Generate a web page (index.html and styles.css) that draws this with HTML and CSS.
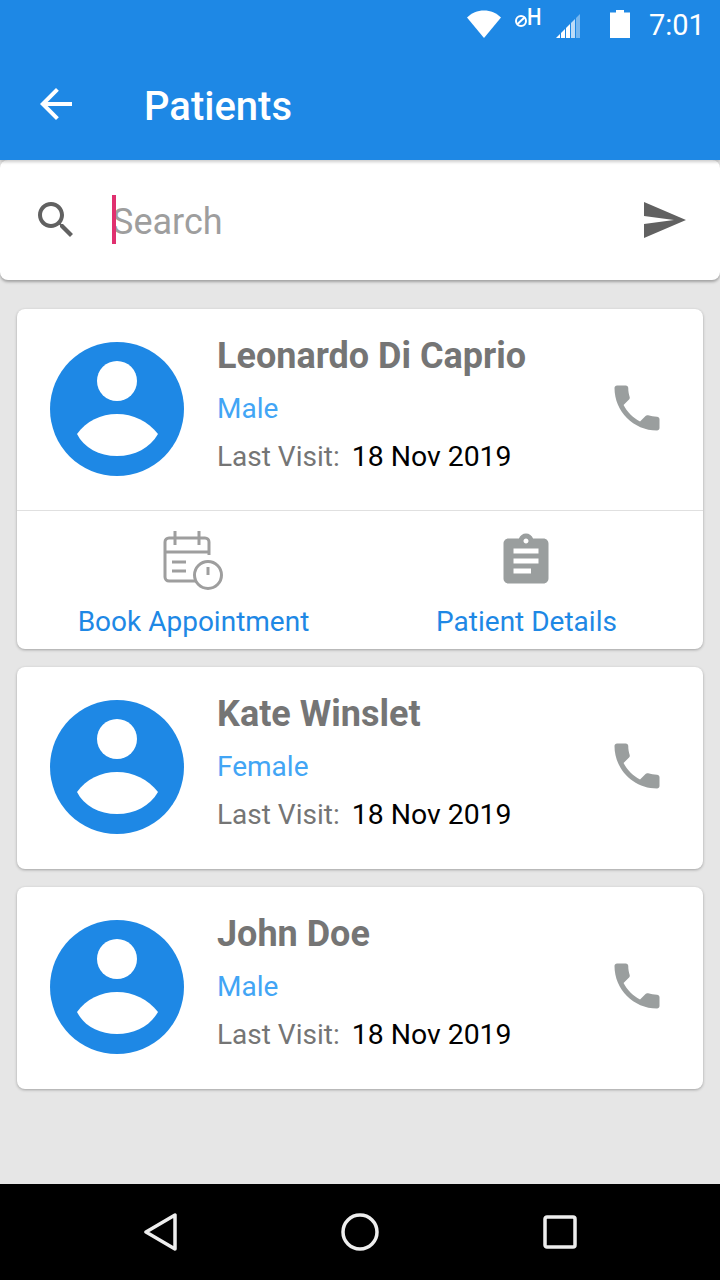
FILE: index.html
```html
<!DOCTYPE html>
<html lang="en">
<head>
  <meta charset="UTF-8" />
  <meta name="viewport" content="width=device-width, initial-scale=1" />
  <title>Patients</title>
  <link rel="stylesheet" href="styles.css">
</head>
<body>
  <div class="app">
    <header class="app-header">
      <div class="status-bar">
        <svg class="icon-wifi" width="34" height="28" viewBox="0 0 36 28" preserveAspectRatio="none"><path d="M0 7.500C5 3 11 .5 18 .5S31 3 36 7.500L18 28z" fill="#fff"/></svg>
        <div class="net-type">
          <svg width="14" height="14" viewBox="0 0 14 14"><circle cx="7" cy="7" r="5" fill="none" stroke="#fff" stroke-width="2"/><path d="M3 10.500L11 3" stroke="#fff" stroke-width="2"/></svg>
          <span>H</span>
        </div>
        <svg class="icon-signal" width="24" height="24" viewBox="0 0 24 24">
          <path d="M0 24l4-4v4z" fill="#fff"/>
          <path d="M5 24v-5l4-4v9z" fill="#fff"/>
          <path d="M10 24V14l4-4v14z" fill="#fff"/>
          <path d="M15 24V9l4-4v19z" fill="#fff" opacity=".7"/>
          <path d="M20 24V4l4-4v24z" fill="#fff" opacity=".4"/>
        </svg>
        <svg class="icon-battery" width="20" height="28" viewBox="0 0 20 28"><path d="M6 0h8v2.500h6V28H0V2.500h6z" fill="#fff"/></svg>
        <span class="clock">7:01</span>
      </div>
      <div class="toolbar">
        <svg class="back" width="48" height="48" viewBox="0 0 24 24"><path d="M20 11H7.830l5.590-5.590L12 4l-8 8 8 8 1.410-1.410L7.830 13H20v-2z" fill="#fff"/></svg>
        <h1>Patients</h1>
      </div>
    </header>

    <div class="search-box">
      <svg width="48" height="48" viewBox="0 0 24 24"><path d="M15.500 14h-.79l-.28-.27C15.410 12.590 16 11.110 16 9.500 16 5.910 13.090 3 9.500 3S3 5.910 3 9.500 5.910 16 9.500 16c1.610 0 3.090-.59 4.230-1.570l.27.28v.79l5 4.990L20.490 19l-4.990-5zm-6 0C7.010 14 5 11.990 5 9.500S7.010 5 9.500 5 14 7.010 14 9.500 11.990 14 9.500 14z" fill="#616161"/></svg>
      <div class="search-field">
        <i class="caret"></i>
        <span>Search</span>
      </div>
      <svg width="48" height="48" viewBox="0 0 24 24"><path d="M2.010 21L23 12 2.010 3 2 10l15 2-15 2z" fill="#616161"/></svg>
    </div>

    <main class="patient-list">
      <section class="card">
        <div class="card-main">
          <svg class="avatar" width="134" height="134" viewBox="0 0 134 134"><circle cx="67" cy="67" r="67" fill="#1e88e5"/><circle cx="67" cy="39" r="20" fill="#fff"/><path d="M27 92C36 79 51 72 67 72S98 79 108 92C100 106 85 114 67 114S34 106 27 92z" fill="#fff"/></svg>
          <div class="info">
            <div class="name">Leonardo Di Caprio</div>
            <div class="gender">Male</div>
            <div class="visit">Last Visit:<span>18 Nov 2019</span></div>
          </div>
          <svg class="phone" width="60" height="60" viewBox="0 0 24 24"><path d="M6.620 10.790c1.440 2.830 3.760 5.140 6.590 6.590l2.200-2.200c.27-.27.67-.36 1.020-.24 1.120.37 2.330.57 3.570.57.55 0 1 .45 1 1V20c0 .55-.45 1-1 1-9.390 0-17-7.610-17-17 0-.55.45-1 1-1h3.500c.55 0 1 .45 1 1 0 1.250.2 2.450.57 3.570.11.35.03.74-.25 1.020l-2.200 2.200z" fill="#9a9e9e"/></svg>
        </div>
        <div class="card-actions">
          <div class="action">
            <svg width="60" height="60" viewBox="0 0 60 60" fill="none" stroke="#9e9e9e" stroke-width="3">
              <path d="M33 50H6a4 4 0 0 1-4-4V11a4 4 0 0 1 4-4h36a4 4 0 0 1 4 4v13"/>
              <path d="M2 21h44M12 0v14M36 0v14M9 31h14M9 40h14"/>
              <circle cx="45" cy="44" r="13.500"/>
              <path d="M45 36v8"/>
            </svg>
            <span>Book Appointment</span>
          </div>
          <div class="action">
            <svg width="60" height="60" viewBox="0 0 24 24"><path d="M19 3h-4.180C14.400 1.840 13.300 1 12 1c-1.300 0-2.400.84-2.820 2H5c-1.100 0-2 .9-2 2v14c0 1.100.9 2 2 2h14c1.100 0 2-.9 2-2V5c0-1.100-.9-2-2-2zm-7 0c.55 0 1 .45 1 1s-.45 1-1 1-1-.45-1-1 .45-1 1-1zm2 14H7v-2h7v2zm3-4H7v-2h10v2zm0-4H7V7h10v2z" fill="#9a9e9e"/></svg>
            <span>Patient Details</span>
          </div>
        </div>
      </section>

      <section class="card">
        <div class="card-main">
          <svg class="avatar" width="134" height="134" viewBox="0 0 134 134"><circle cx="67" cy="67" r="67" fill="#1e88e5"/><circle cx="67" cy="39" r="20" fill="#fff"/><path d="M27 92C36 79 51 72 67 72S98 79 108 92C100 106 85 114 67 114S34 106 27 92z" fill="#fff"/></svg>
          <div class="info">
            <div class="name">Kate Winslet</div>
            <div class="gender">Female</div>
            <div class="visit">Last Visit:<span>18 Nov 2019</span></div>
          </div>
          <svg class="phone" width="60" height="60" viewBox="0 0 24 24"><path d="M6.620 10.790c1.440 2.830 3.760 5.140 6.590 6.590l2.200-2.200c.27-.27.67-.36 1.020-.24 1.120.37 2.330.57 3.570.57.55 0 1 .45 1 1V20c0 .55-.45 1-1 1-9.390 0-17-7.610-17-17 0-.55.45-1 1-1h3.500c.55 0 1 .45 1 1 0 1.250.2 2.450.57 3.570.11.35.03.74-.25 1.020l-2.200 2.200z" fill="#9a9e9e"/></svg>
        </div>
      </section>

      <section class="card">
        <div class="card-main">
          <svg class="avatar" width="134" height="134" viewBox="0 0 134 134"><circle cx="67" cy="67" r="67" fill="#1e88e5"/><circle cx="67" cy="39" r="20" fill="#fff"/><path d="M27 92C36 79 51 72 67 72S98 79 108 92C100 106 85 114 67 114S34 106 27 92z" fill="#fff"/></svg>
          <div class="info">
            <div class="name">John Doe</div>
            <div class="gender">Male</div>
            <div class="visit">Last Visit:<span>18 Nov 2019</span></div>
          </div>
          <svg class="phone" width="60" height="60" viewBox="0 0 24 24"><path d="M6.620 10.790c1.440 2.830 3.760 5.140 6.590 6.590l2.200-2.200c.27-.27.67-.36 1.020-.24 1.120.37 2.330.57 3.570.57.55 0 1 .45 1 1V20c0 .55-.45 1-1 1-9.390 0-17-7.610-17-17 0-.55.45-1 1-1h3.500c.55 0 1 .45 1 1 0 1.250.2 2.450.57 3.570.11.35.03.74-.25 1.020l-2.200 2.200z" fill="#9a9e9e"/></svg>
        </div>
      </section>
    </main>

    <nav class="nav-bar">
      <svg width="34" height="38" viewBox="0 0 34 38"><path d="M3 19L32 2v34z" fill="none" stroke="#eee" stroke-width="3.500" stroke-linejoin="round"/></svg>
      <svg width="38" height="38" viewBox="0 0 38 38"><circle cx="19" cy="19" r="17" fill="none" stroke="#eee" stroke-width="3.500"/></svg>
      <svg width="34" height="34" viewBox="0 0 34 34"><rect x="2" y="2" width="30" height="30" rx="2" fill="none" stroke="#eee" stroke-width="3.500"/></svg>
    </nav>
  </div>
</body>
</html>
```

FILE: styles.css
```css
* {
  box-sizing: border-box;
}

body {
  margin: 0;
  font-family: Roboto, "Liberation Sans", sans-serif;
  background-color: #e6e6e6;
}

.app {
  width: 720px;
  height: 1280px;
  display: flex;
  flex-direction: column;
  overflow: hidden;
}

/* Header */
.app-header {
  position: relative;
  z-index: 1;
  height: 160px;
  background-color: #1e88e5;
  color: #fff;
  box-shadow: 0 2px 3px rgba(0,0,0,0.2);
}

.status-bar {
  height: 48px;
  display: flex;
  align-items: center;
  padding: 0 0 0 467px;
}

.net-type {
  display: flex;
  align-items: flex-start;
  width: 29px;
  height: 28px;
  margin-left: 13px;
  font-size: 24px;
  line-height: 24px;
  font-weight: 500;
}

.net-type svg {
  flex: none;
  margin-top: 4px;
}

.net-type span {
  margin: -5px 0 0 -1px;
  transform: scaleX(.85);
  transform-origin: left;
}

.icon-signal {
  margin: 4px 0 0 13px;
}

.icon-battery {
  margin-left: 30px;
}

.clock {
  margin: 2px 0 0 19px;
  font-size: 29px;
}

.toolbar {
  height: 112px;
  display: flex;
  align-items: center;
  padding: 0 32px;
}

.toolbar h1 {
  margin: 4px 0 0 64px;
  font-size: 40px;
  font-weight: 500;
}

/* Search */
.search-box {
  height: 120px;
  display: flex;
  align-items: center;
  padding: 0 32px;
  background: #fff;
  border-radius: 8px;
  box-shadow: 0 2px 3px rgba(0,0,0,0.3);
}

.search-field {
  position: relative;
  flex: 1;
  padding: 4px 0 0 32px;
  font-size: 36px;
  color: #9e9e9e;
}

.caret {
  position: absolute;
  left: 32px;
  top: -2px;
  width: 4px;
  height: 49px;
  background-color: #e0306f;
}

/* Patient cards */
.patient-list {
  flex: 1;
  display: flex;
  flex-direction: column;
  gap: 18px;
  padding: 29px 17px 0;
}

.card {
  background: #fff;
  border-radius: 8px;
  box-shadow: 0 1px 3px rgba(0,0,0,0.3);
}

.card-main {
  height: 202px;
  display: flex;
  align-items: center;
  padding: 0 36px 3px 33px;
}

.info {
  flex: 1;
  margin: 0 0 4px 33px;
}

.phone {
  margin-bottom: 2px;
}

.name {
  height: 48px;
  line-height: 48px;
  margin-bottom: 5px;
  font-size: 36px;
  font-weight: 700;
  color: #757575;
}

.gender {
  height: 48px;
  line-height: 48px;
  font-size: 28px;
  color: #42a5f5;
}

.visit {
  height: 48px;
  line-height: 48px;
  font-size: 28px;
  color: #757575;
}

.visit span {
  margin-left: 12px;
  font-size: 28.4px;
  color: #000;
}

.card-actions {
  height: 139px;
  margin-top: -1px;
  display: grid;
  grid-template-columns: 1fr 1fr;
  padding: 20px 10px 0;
  border-top: 1px solid #e0e0e0;
}

.action {
  display: flex;
  flex-direction: column;
  align-items: center;
  font-size: 28px;
  color: #1e88e5;
}

.action svg {
  margin-left: -2px;
}

.action span {
  line-height: 40px;
  margin-top: 11px;
}

/* Android nav bar */
.nav-bar {
  height: 96px;
  display: flex;
  align-items: center;
  justify-content: space-between;
  padding: 0 143px;
  background-color: #000;
}
```
